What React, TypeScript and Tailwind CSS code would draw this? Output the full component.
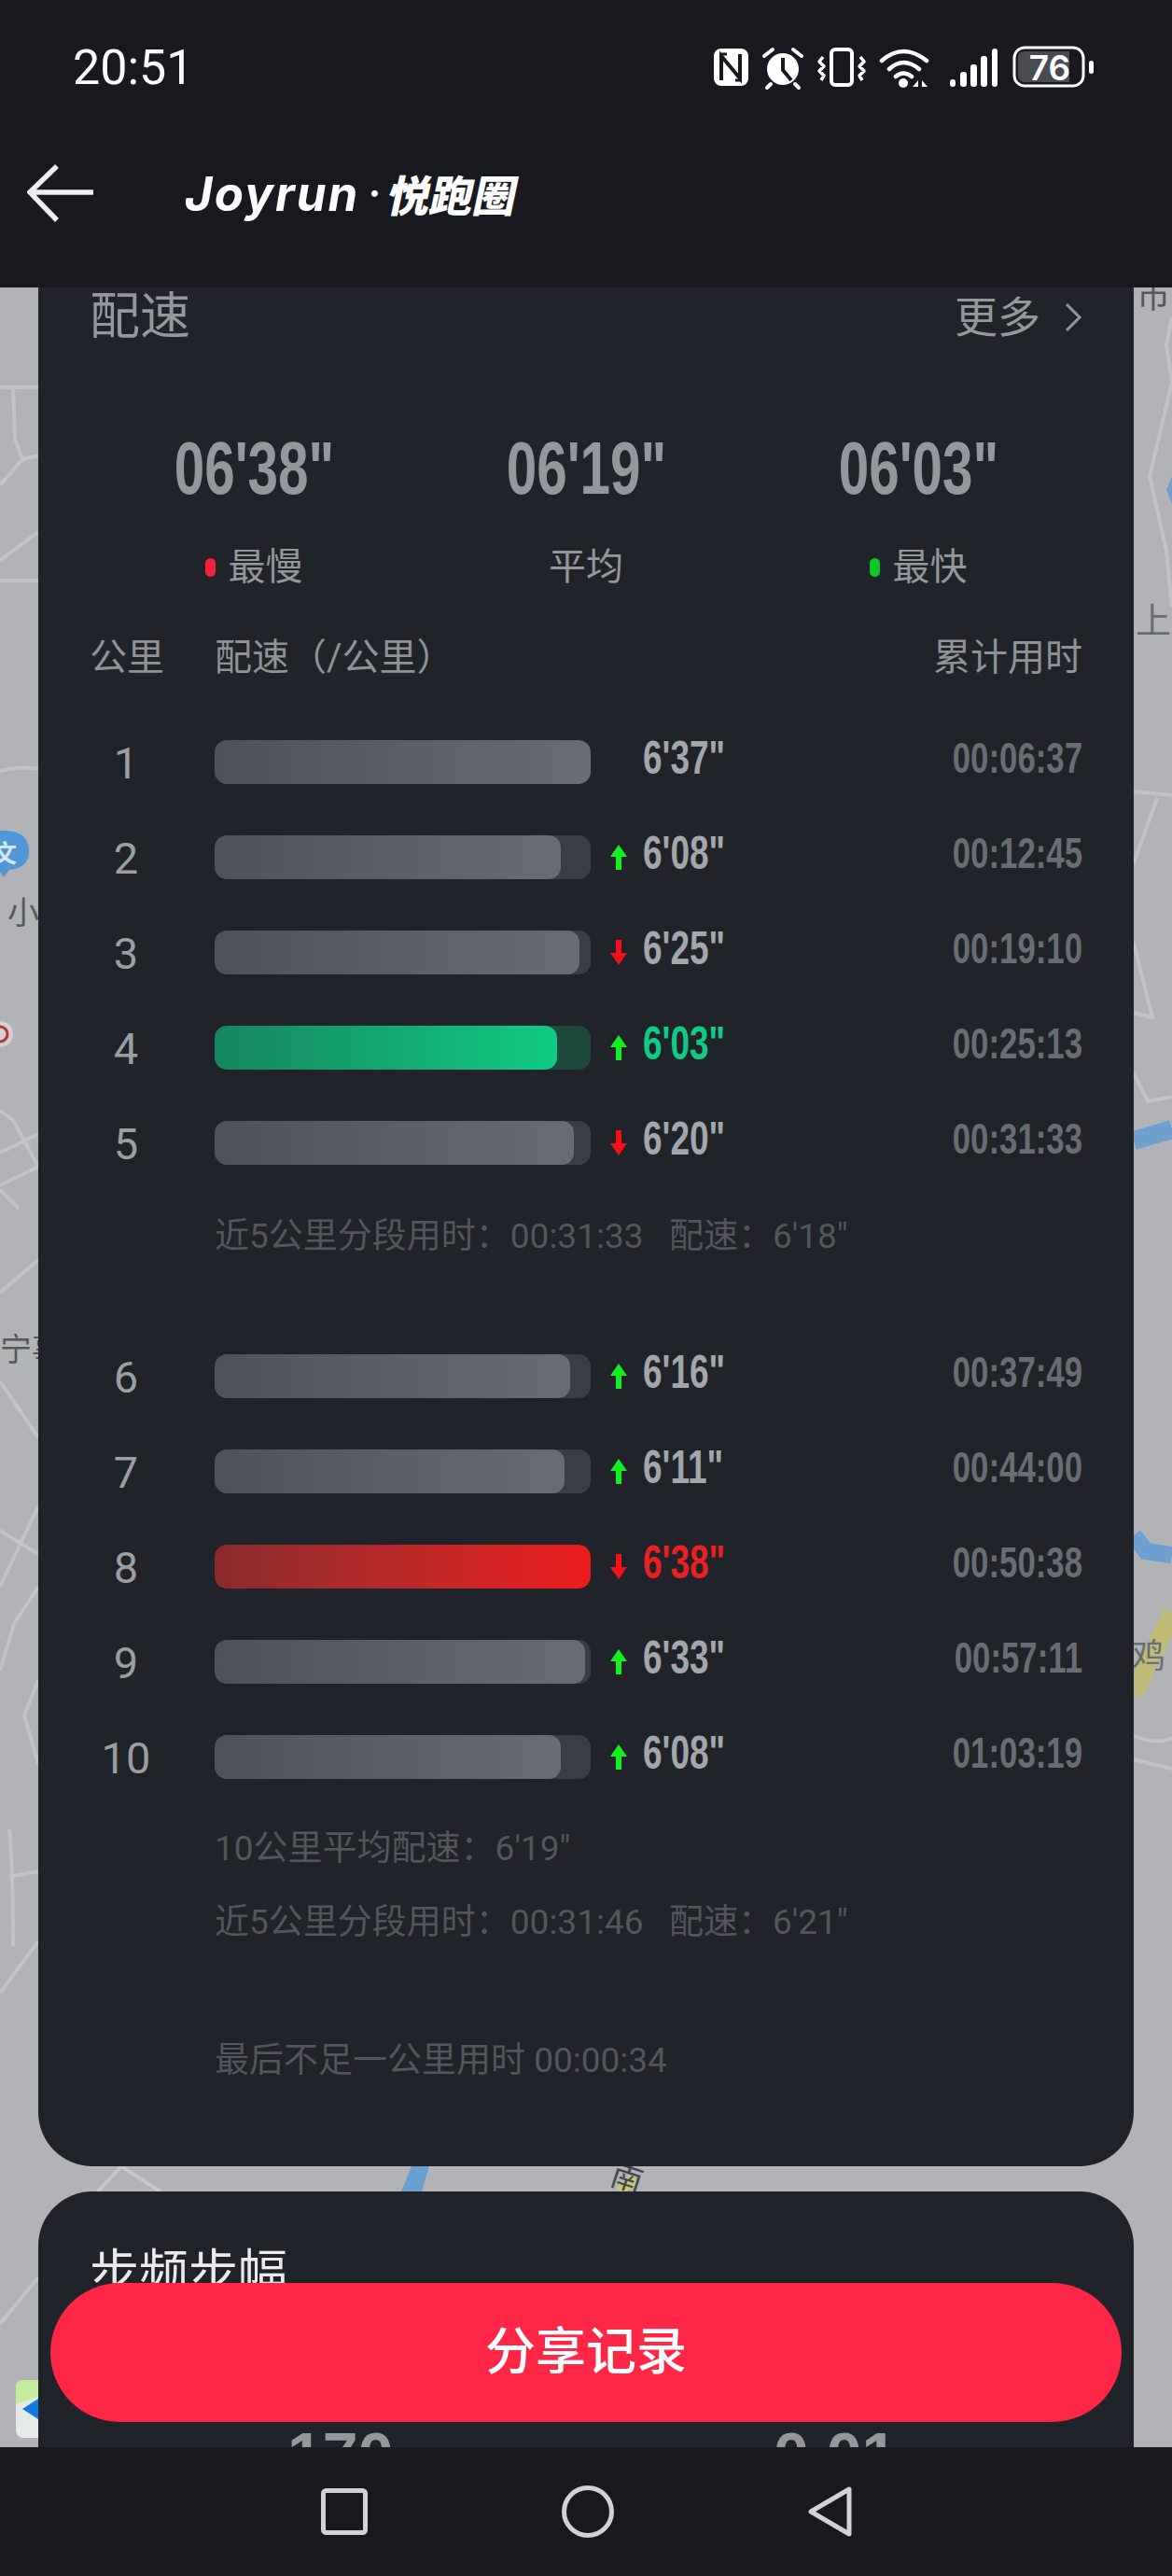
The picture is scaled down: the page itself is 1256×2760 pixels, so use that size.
const SANS = "font-['Roboto','Noto_Sans_CJK_SC',sans-serif]";

interface Split {
  km: number;
  pct: number;
  pace: string;
  total: string;
  trend?: 'up' | 'down';
  tone?: 'green' | 'red';
}

const firstFive: Split[] = [
  { km: 1, pct: 100, pace: `6'37"`, total: '00:06:37' },
  { km: 2, pct: 92, pace: `6'08"`, total: '00:12:45', trend: 'up' },
  { km: 3, pct: 97, pace: `6'25"`, total: '00:19:10', trend: 'down' },
  { km: 4, pct: 91, pace: `6'03"`, total: '00:25:13', trend: 'up', tone: 'green' },
  { km: 5, pct: 95.5, pace: `6'20"`, total: '00:31:33', trend: 'down' },
];

const nextFive: Split[] = [
  { km: 6, pct: 94.5, pace: `6'16"`, total: '00:37:49', trend: 'up' },
  { km: 7, pct: 93, pace: `6'11"`, total: '00:44:00', trend: 'up' },
  { km: 8, pct: 100, pace: `6'38"`, total: '00:50:38', trend: 'down', tone: 'red' },
  { km: 9, pct: 98.5, pace: `6'33"`, total: '00:57:11', trend: 'up' },
  { km: 10, pct: 92, pace: `6'08"`, total: '01:03:19', trend: 'up' },
];

function MapBackdrop() {
  const road = 'fill-none stroke-[#c2c4c7]';
  return (
    <svg className="absolute inset-0 w-full h-full" viewBox="0 308 1256 2314" preserveAspectRatio="none">
      {/* left edge */}
      <g className={road} strokeWidth="4">
        <path d="M0 415H41M14 415L16 470L24 492L0 520M24 492L41 488M0 600L14 590L41 570M0 622H41M0 826Q20 820 41 824" />
        <path d="M0 1190L14 1200L41 1250M0 1235L41 1215M0 1270L41 1250M0 1275L20 1295" />
        <path d="M0 1385L41 1350M0 1480L41 1540M0 1700L41 1614M0 1640L41 1665M0 1790L15 1740L41 1700" />
        <path d="M41 1800L26 1838L41 1890M10 1960Q14 2000 14 2085M14 2010L41 2005M0 2135L41 2080M0 2490L41 2440" />
      </g>
      {/* right edge */}
      <g className={road} strokeWidth="4">
        <path d="M1256 340L1250 370L1256 410L1232 510L1250 590L1256 650" />
        <path d="M1215 848L1256 852M1215 925L1240 855M1215 1010L1235 1090L1215 1085M1215 1150L1230 1180L1256 1175" />
        <path d="M1215 1860Q1240 1870 1256 1862M1215 1885L1256 1895" />
      </g>
      <path d="M1215 1222L1256 1210" fill="none" stroke="#6e9fce" strokeWidth="20" />
      <path d="M1215 1645L1228 1662L1256 1666" fill="none" stroke="#6e9fce" strokeWidth="18" />
      <path d="M1256 510V540L1250 525Z" fill="#6e9fce" />
      <path d="M1215 1815L1256 1728" fill="none" stroke="#c2bb78" strokeWidth="20" />
      {/* gap between the two cards */}
      <path d="M441 2321H460L452 2348H430Z" fill="#6a9fd0" />
      <path d="M105 2348L130 2321L172 2348" fill="none" stroke="#c6c8cb" strokeWidth="4" />
      <path d="M664 2348L680 2334" fill="none" stroke="#c9c57e" strokeWidth="12" />
      <text x="0" y="0" fontSize="34" fill="#45474b" fontFamily="Noto Sans CJK SC" transform="translate(652 2340) rotate(18)">南</text>
      {/* poi pin */}
      <path d="M0 890H8Q31 892 31 912Q31 930 10 932L4 940L0 934Z" fill="#4f97d7" />
      <text x="-8" y="924" fontSize="26" fontWeight="700" fill="#d6e5f2" fontFamily="Noto Sans CJK SC">文</text>
      <circle cx="0" cy="1108" r="14" fill="#d2d2d4" />
      <circle cx="0" cy="1108" r="8" fill="none" stroke="#b6343b" strokeWidth="3" />
      {/* app icon */}
      <rect x="17" y="2550" width="30" height="62" rx="8" fill="#e6eae9" />
      <path d="M17 2576V2558Q17 2550 25 2550H41V2568Z" fill="#c1ed9c" />
      <path d="M24 2581L41 2570V2592Z" fill="#1479e0" />
      <text x="0" y="1458" fontSize="34" fill="#55585c" fontFamily="Noto Sans CJK SC">宁</text>
      <text x="34" y="1458" fontSize="34" fill="#55585c" fontFamily="Noto Sans CJK SC">事</text>
      <text x="8" y="990" fontSize="34" fill="#55585c" fontFamily="Noto Sans CJK SC">小</text>
      <text x="1217" y="678" fontSize="38" fill="#6a6d71" fontFamily="Noto Sans CJK SC">上</text>
      <text x="1218" y="330" fontSize="36" fill="#55585c" fontFamily="Noto Sans CJK SC">市</text>
      <text x="1213" y="1787" fontSize="36" fill="#6a6d71" fontFamily="Noto Sans CJK SC">鸡</text>
    </svg>
  );
}

function StatusIcons() {
  return (
    <svg width="420" height="50" viewBox="0 0 420 50" className="block" fill="#fff">
      {/* nfc */}
      <rect x="5" y="4" width="37" height="40" rx="8" />
      <path d="M13 38V12L33 36V10" fill="none" stroke="#17191e" strokeWidth="4" />
      <path d="M19 10H13M28 38H34" fill="none" stroke="#17191e" strokeWidth="3" />
      {/* alarm */}
      <circle cx="79" cy="26" r="17" />
      <path d="M79 14V27L88 38" fill="none" stroke="#17191e" strokeWidth="4" />
      <path d="M59 12L68 5M99 12L90 5M66 42L62 46M92 42L96 46" fill="none" stroke="#fff" strokeWidth="4" strokeLinecap="round" />
      {/* vibrate */}
      <rect x="131" y="5" width="22" height="38" rx="4" fill="none" stroke="#fff" strokeWidth="4" />
      <path d="M122 13L118 18L123 23L118 28L123 33L120 38M162 13L166 18L161 23L166 28L161 33L164 38" fill="none" stroke="#fff" strokeWidth="3.5" strokeLinejoin="round" />
      {/* wifi */}
      <path d="M185 17Q208 -3 233 17M193 26Q208 12 225 26M200 34Q208 27 217 34" fill="none" stroke="#fff" strokeWidth="4.5" strokeLinecap="round" />
      <circle cx="208" cy="41" r="5" />
      <path d="M224 38V45H218ZM228 38V45H234Z" />
      {/* signal */}
      <rect x="258" y="37" width="6" height="8" rx="3" />
      <rect x="269" y="29" width="7" height="16" rx="3" />
      <rect x="280" y="21" width="7" height="24" rx="3" />
      <rect x="291" y="12" width="7" height="33" rx="3" />
      <rect x="303" y="4" width="6" height="41" rx="3" />
      {/* battery */}
      <rect x="327" y="3" width="74" height="41" rx="11" fill="none" stroke="#fff" strokeWidth="3" />
      <path d="M331 14Q331 7 338 7H386V40H338Q331 40 331 33Z" fill="#4a4b50" />
      <rect x="407" y="17" width="5" height="14" rx="2.5" />
      <text x="365" y="38" textAnchor="middle" fontSize="37" fontWeight="600" fontFamily="Inter" fill="#fff">76</text>
    </svg>
  );
}

function TopBar() {
  return (
    <header className="h-[308px] shrink-0 bg-[#17191e] flex flex-col">
      <div className="h-[48px] mt-[49px] flex items-center justify-between pl-[78px] pr-[76px]">
        <span className={`${SANS} text-[52px] leading-none text-white`}>20:51</span>
        <StatusIcons />
      </div>
      <div className="flex items-center mt-[70px] h-[80px] pl-[29px]">
        <svg width="72" height="62" viewBox="0 0 72 62" className="block">
          <path d="M32 2L3 30L32 60M4 30H71" fill="none" stroke="#eceef4" strokeWidth="5.5" />
        </svg>
        <div className="ml-[97px] flex items-center text-white italic">
          <span className="font-['Inter',sans-serif] font-bold text-[51px] leading-none tracking-[2px]">Joyrun</span>
          <span className="font-['Inter',sans-serif] font-bold text-[40px] leading-none mx-[9px]">·</span>
          <span className="font-['Noto_Sans_CJK_SC',sans-serif] not-italic font-black text-[46px] leading-none -skew-x-12">悦跑圈</span>
        </div>
      </div>
    </header>
  );
}

function TrendArrow({ trend }: { trend?: 'up' | 'down' }) {
  if (!trend) return <span className="w-[18px] ml-[21px] shrink-0" />;
  return (
    <svg width="18" height="27" viewBox="0 0 18 27" className={`ml-[21px] shrink-0 ${trend === 'down' ? 'rotate-180' : ''}`}>
      <path d="M9 0L18 13H12V27H6V13H0Z" fill={trend === 'up' ? '#12f01f' : '#f50f17'} />
    </svg>
  );
}

function SplitRow({ split }: { split: Split }) {
  const track =
    split.tone === 'green' ? 'bg-[#1e493c]' : split.tone === 'red' ? 'bg-[#5a2426]' : 'bg-[#3a3d45]';
  const fill =
    split.tone === 'green'
      ? 'from-[#15865f] to-[#0fcb83]'
      : split.tone === 'red'
        ? 'from-[#8a2a2c] to-[#ec1b1b]'
        : 'from-[#4e5159] to-[#696c74]';
  const paceColor =
    split.tone === 'green' ? 'text-[#10cb84]' : split.tone === 'red' ? 'text-[#e8201f]' : 'text-[#a3a6aa]';
  return (
    <div className="flex items-center h-[47px]">
      <span className={`${SANS} w-[78px] text-center text-[47px] leading-none text-[#9b9ea3] shrink-0 pt-[2px]`}>
        {split.km}
      </span>
      <div className={`ml-[56px] w-[403px] h-[47px] rounded-[13px] overflow-hidden shrink-0 ${track}`}>
        <div className={`h-full rounded-[13px] bg-gradient-to-r ${fill}`} style={{ width: `${split.pct}%` }} />
      </div>
      <TrendArrow trend={split.trend} />
      <span className={`font-['Liberation_Sans',sans-serif] font-bold ml-[17px] text-[50px] leading-none pb-[10px] whitespace-nowrap w-[100px] inline-block origin-left scale-x-[0.74] ${paceColor}`}>
        {split.pace}
      </span>
      <span className="flex-1 text-right font-['Liberation_Sans',sans-serif] font-bold text-[47px] leading-none pb-[10px] text-[#696c73] whitespace-nowrap origin-right scale-x-[0.74]">
        {split.total}
      </span>
    </div>
  );
}

function SplitNote({ children, className = '' }: { children: React.ReactNode; className?: string }) {
  return (
    <div className={`${SANS} h-[44px] pl-[134px] text-[37px] leading-[44px] text-[#53565c] whitespace-pre ${className}`}>
      {children}
    </div>
  );
}

function SummaryStat({ value, label, dot }: { value: string; label: string; dot?: string }) {
  return (
    <div className="flex flex-col items-center w-[356px]">
      <span className="font-['Liberation_Sans',sans-serif] font-bold text-[80px] leading-[80px] text-[#94979b] scale-x-[0.73] whitespace-nowrap">
        {value}
      </span>
      <span className={`${SANS} mt-[44px] h-[44px] flex items-center text-[40px] leading-none text-[#94979b]`}>
        {dot && <i className={`w-[11px] h-[20px] rounded-full mr-[14px] ${dot}`} />}
        {label}
      </span>
    </div>
  );
}

export default function App() {
  return (
    <div className="relative w-[1256px] h-[2760px] flex flex-col overflow-hidden bg-[#17191e]">
      <TopBar />

      <main className="relative h-[2314px] shrink-0 overflow-hidden bg-[#b1b3b7] px-[41px]">
        <MapBackdrop />

        <section className="relative h-[2013px] bg-[#202329] rounded-b-[58px] px-[55px]">
          <div className={`${SANS} flex items-center justify-between h-[60px] pt-[4px] text-[#94979b]`}>
            <span className="text-[54px] leading-none">配速</span>
            <span className="flex items-center text-[46px] leading-none">
              更多
              <svg width="20" height="32" viewBox="0 0 20 32" className="ml-[25px]">
                <path d="M3 2L17 16L3 30" fill="none" stroke="#94979b" strokeWidth="3" />
              </svg>
            </span>
          </div>

          <div className="flex justify-center mt-[94px] -mx-[55px]">
            <SummaryStat value={`06'38"`} label="最慢" dot="bg-[#f5213f]" />
            <SummaryStat value={`06'19"`} label="平均" />
            <SummaryStat value={`06'03"`} label="最快" dot="bg-[#0cc62c]" />
          </div>

          <div className={`${SANS} flex items-center h-[44px] mt-[53px] text-[40px] leading-none text-[#8f9296]`}>
            <span className="w-[134px]">公里</span>
            <span>配速（/公里）</span>
            <span className="ml-auto">累计用时</span>
          </div>

          <div className="flex flex-col gap-[55px] mt-[66px]">
            {firstFive.map((split) => (
              <SplitRow key={split.km} split={split} />
            ))}
          </div>
          <SplitNote className="mt-[55px]">{`近5公里分段用时：00:31:33   配速：6'18"`}</SplitNote>

          <div className="flex flex-col gap-[55px] mt-[104px]">
            {nextFive.map((split) => (
              <SplitRow key={split.km} split={split} />
            ))}
          </div>
          <SplitNote className="mt-[53px]">{`10公里平均配速：6'19"`}</SplitNote>
          <SplitNote className="mt-[35px]">{`近5公里分段用时：00:31:46   配速：6'21"`}</SplitNote>
          <SplitNote className="mt-[104px]">最后不足一公里用时 00:00:34</SplitNote>
        </section>

        <section className="relative h-[400px] mt-[27px] bg-[#202329] rounded-t-[58px] px-[55px]">
          <h2 className={`${SANS} pt-[62px] text-[53px] leading-none font-normal text-[#e8eaec]`}>步频步幅</h2>
          <div className="font-['Liberation_Sans',sans-serif] font-bold text-[68px] leading-none text-[#94979b]">
            <span className="absolute left-[267px] top-[248px]">170</span>
            <span className="absolute left-[788px] top-[248px]">0.01</span>
          </div>
        </section>
      </main>

      {/* floating share button */}
      <button className={`${SANS} absolute left-[54px] top-[2446px] w-[1148px] h-[149px] rounded-full bg-[#ff2646] text-white text-[54px] font-medium`}>
        分享记录
      </button>

      <nav className="relative h-[138px] shrink-0 bg-[#17191e] flex items-center justify-center">
        <div className="flex items-center gap-[208px] -mt-[1px]">
          <svg width="50" height="50" viewBox="0 0 50 50">
            <rect x="2.5" y="2.5" width="45" height="45" rx="3" fill="none" stroke="#d0d2d4" strokeWidth="5" />
          </svg>
          <svg width="56" height="56" viewBox="0 0 56 56">
            <circle cx="28" cy="28" r="25.5" fill="none" stroke="#d0d2d4" strokeWidth="5" />
          </svg>
          <svg width="47" height="54" viewBox="0 0 47 54">
            <path d="M44 3V51L3 27Z" fill="none" stroke="#d0d2d4" strokeWidth="5" strokeLinejoin="round" />
          </svg>
        </div>
      </nav>
    </div>
  );
}
